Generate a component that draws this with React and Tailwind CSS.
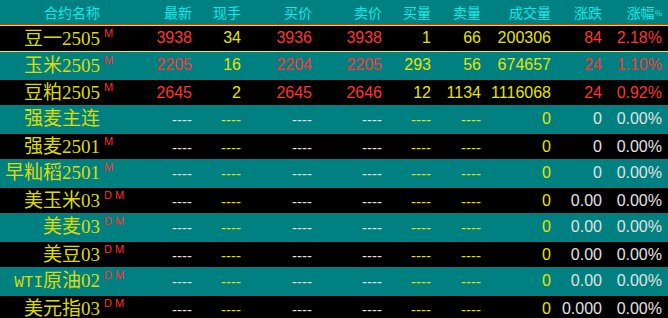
import React from 'react';

const RED = 'text-[#ff3434]';
const YEL = 'text-[#e4e400]';
const WHT = 'text-[#e2e2e2]';

const cols = ['w-[62px]', 'w-[49px]', 'w-[71px]', 'w-[70px]', 'w-[49px]', 'w-[50px]', 'w-[70px]', 'w-[51px]', 'w-[60px]'];
const heads = ['最新', '现手', '买价', '卖价', '买量', '卖量', '成交量', '涨跌'];

const live = (v) => [
  [v[0], RED], [v[1], YEL], [v[2], RED], [v[3], RED], [v[4], YEL], [v[5], YEL], [v[6], YEL], [v[7], RED], [v[8], RED],
];
const idle = (chg) => [
  ['----', WHT, true], ['----', YEL, true], ['----', WHT, true], ['----', WHT, true], ['----', YEL, true], ['----', YEL, true],
  ['0', YEL], [chg, WHT], ['0.00%', WHT],
];

const rows = [
  { name: '豆一2505', sup: 'M', cells: live(['3938', '34', '3936', '3938', '1', '66', '200306', '84', '2.18%']) },
  { name: '玉米2505', sup: 'M', cells: live(['2205', '16', '2204', '2205', '293', '56', '674657', '24', '1.10%']) },
  { name: '豆粕2505', sup: 'M', cells: live(['2645', '2', '2645', '2646', '12', '1134', '1116068', '24', '0.92%']) },
  { name: '强麦主连', sup: '', cells: idle('0') },
  { name: '强麦2501', sup: 'M', cells: idle('0') },
  { name: '早籼稻2501', sup: 'M', cells: idle('0') },
  { name: '美玉米03', sup: 'D M', cells: idle('0.00') },
  { name: '美麦03', sup: 'D M', cells: idle('0.00') },
  { name: '美豆03', sup: 'D M', cells: idle('0.00') },
  { name: 'WTI原油02', sup: 'D M', cells: idle('0.00'), wti: true },
  { name: '美元指03', sup: 'D M', cells: idle('0.000') },
];

const rowClass = (i) => {
  if (i === 0) return 'h-[28px] bg-black border-t border-t-[#ff2020] border-b border-b-[#f0f000] shadow-[inset_0_1px_0_#f0f000]';
  if (i === 1) return 'h-[26px] bg-[#008080]';
  return i % 2 === 0 ? 'h-[27px] bg-black border-t-2 border-t-[#008080]' : 'h-[27px] bg-[#008080]';
};

function Name({ row }) {
  if (row.wti) {
    const m = row.name.match(/^(WTI)(.*)$/);
    return (
      <>
        <span className="font-['Liberation_Mono',monospace] text-[16px]">{m[1]}</span>
        {m[2]}
      </>
    );
  }
  return row.name;
}

export default function App() {
  return (
    <div className="w-[668px] h-[318px] overflow-hidden bg-black font-['Liberation_Sans','Noto_Sans_CJK_SC',sans-serif]">
      <div className="h-[24px] bg-[#008080] flex items-center text-[14px] text-[#16e6e6] font-['Noto_Sans_CJK_SC',sans-serif] leading-none">
        <div className="w-[100px] text-right">合约名称</div>
        <div className="w-[30px]" />
        {heads.map((h, i) => (
          <div key={h} className={`${cols[i]} text-right`}>{h}</div>
        ))}
        <div className={`${cols[8]} text-right`}>
          涨幅<span className="text-[8px] relative -top-[2px]">%</span>
        </div>
      </div>
      {rows.map((r, i) => (
        <div key={r.name} className={`flex items-center box-border ${rowClass(i)}`}>
          <div className="w-[100px] text-right whitespace-nowrap text-[19px] leading-none text-[#dcdc00] font-['Liberation_Serif','Noto_Sans_CJK_SC',serif]">
            <Name row={r} />
          </div>
          <div className="w-[30px] pl-[4px] text-[11px] leading-none text-[#ff3030] whitespace-pre relative -top-[5px]">
            {r.sup}
          </div>
          {r.cells.map(([v, c, dash], j) => (
            <div
              key={j}
              className={`${cols[j]} text-right leading-none ${c} ${dash ? 'text-[15px] relative top-[1px]' : 'text-[16px]'}`}
            >
              {v}
            </div>
          ))}
        </div>
      ))}
    </div>
  );
}
